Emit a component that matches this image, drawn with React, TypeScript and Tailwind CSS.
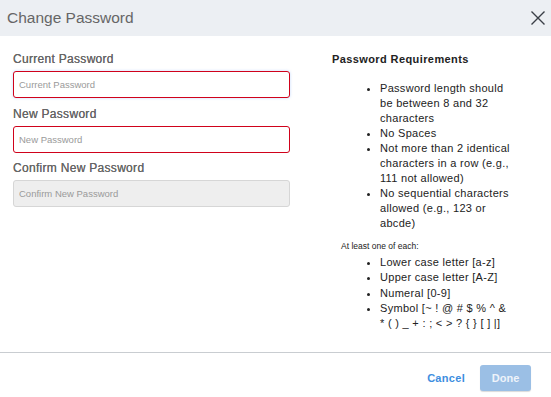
import React from 'react';

// lines are broken by hand so the wrap matches the dialog
const requirements = [
  ['Password length should', 'be between 8 and 32', 'characters'],
  ['No Spaces'],
  ['Not more than 2 identical', 'characters in a row (e.g.,', '111 not allowed)'],
  ['No sequential characters', 'allowed (e.g., 123 or', 'abcde)'],
];

const eachOf = [
  ['Lower case letter [a-z]'],
  ['Upper case letter [A-Z]'],
  ['Numeral [0-9]'],
  ['Symbol [~ ! @ # $ % ^ &', '* ( ) _ + : ; < > ? { } [ ] |]'],
];

const Field = ({
  label,
  placeholder,
  state,
}: {
  label: string;
  placeholder: string;
  state: 'focus' | 'error' | 'disabled';
}) => (
  <div className="flex flex-col">
    <label className="text-[12px] text-[#666] tracking-[0.3px] leading-[14px] mb-[5px] [text-shadow:0_0_0.4px_#666]">{label}</label>
    <input
      type="password"
      placeholder={placeholder}
      disabled={state === 'disabled'}
      className={`h-[27px] w-full rounded-[3px] px-[5px] text-[9.5px] outline-none placeholder:text-[#9a9a9a] ${
        state === 'disabled'
          ? 'bg-[#eeeeee] border border-[#d6d6d6]'
          : state === 'focus'
          ? 'bg-white border border-[#d0021b] shadow-[0_0_3px_rgba(120,170,255,0.45)]'
          : 'bg-white border border-[#d0021b]'
      }`}
    />
  </div>
);

const BulletList = ({ items, className }: { items: string[][]; className: string }) => (
  <ul className={`pl-[48px] list-disc text-[11px] tracking-[0.3px] whitespace-nowrap ${className}`}>
    {items.map((lines) => (
      <li key={lines[0]}>
        {lines.map((l, i) => (
          <React.Fragment key={l}>
            {i > 0 && <br />}
            {l}
          </React.Fragment>
        ))}
      </li>
    ))}
  </ul>
);

const App: React.FC = () => {
  return (
    <div className="w-[551px] h-[397px] bg-white flex flex-col font-['Liberation_Sans',Arial,sans-serif]">
      {/* Header */}
      <header className="h-[36px] bg-[#eceff3] flex items-center justify-between pl-[7px] pr-[5px] shrink-0">
        <span className="text-[15.5px] text-[#666] leading-none">Change Password</span>
        <svg width="16" height="16" viewBox="0 0 16 16" className="text-[#3a3f47]">
          <path d="M1.5 1.5 L14.5 14.5 M14.5 1.5 L1.5 14.5" stroke="currentColor" strokeWidth="1.4" fill="none" />
        </svg>
      </header>

      {/* Body */}
      <main className="flex-1 flex pl-[13px] pt-[16px]">
        <div className="w-[277px] flex flex-col gap-[8.5px]">
          <Field label="Current Password" placeholder="Current Password" state="focus" />
          <Field label="New Password" placeholder="New Password" state="error" />
          <Field label="Confirm New Password" placeholder="Confirm New Password" state="disabled" />
        </div>

        <div className="ml-[42px] w-[200px] text-[#222] pt-[1px]">
          <h3 className="text-[11px] font-bold leading-[13px] tracking-[0.4px]">Password Requirements</h3>
          <BulletList items={requirements} className="mt-[15px] leading-[15px]" />
          <p className="mt-[9px] ml-[9px] text-[8.5px] leading-[12px]">At least one of each:</p>
          <BulletList items={eachOf} className="mt-[3px] leading-[15.3px]" />
        </div>
      </main>

      {/* Footer */}
      <footer className="h-[45px] border-t border-[#c9cdd1] flex items-start justify-end gap-[15px] pt-[12px] pr-[20px] shrink-0">
        <button className="h-[26px] text-[11px] font-bold text-[#3d8ee0] tracking-[0.3px]">Cancel</button>
        <button disabled className="h-[26px] w-[51px] rounded-[3px] bg-[#9bbfe5] text-[#eef3fa] text-[11px] font-bold shadow-[0_1px_1px_rgba(0,0,0,0.15)]">
          Done
        </button>
      </footer>
    </div>
  );
};

export default App;
